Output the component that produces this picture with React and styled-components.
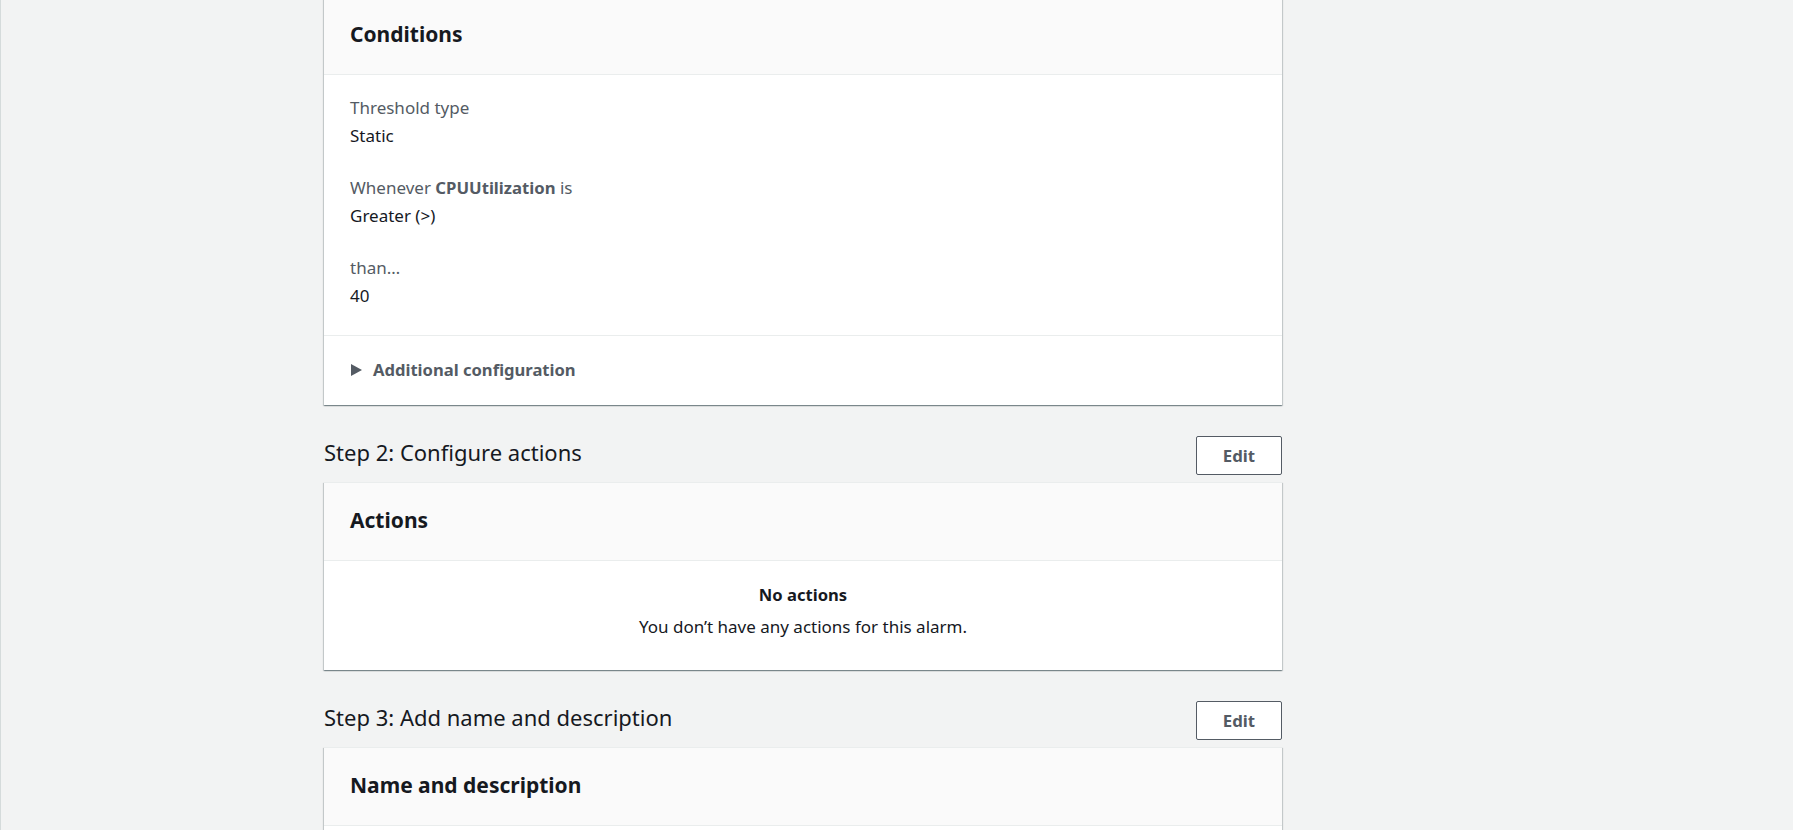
import React from 'react'
import styled, { createGlobalStyle } from 'styled-components'

const GlobalStyle = createGlobalStyle`
  body {
    margin: 0;
    background: #f2f3f3;
    font-family: "Noto Sans", "Open Sans", Arial, sans-serif;
    color: #16191f;
  }
`

const Page = styled.div`
  min-height: 100vh;
  border-left: 1px solid #d5dbdb;
  padding-left: 323px;
  overflow: hidden;
`

// page is scrolled a little, the first card's top is cut off
const Column = styled.div`
  width: 958px;
  margin-top: -4px;
`

const Card = styled.section`
  background: #fff;
  border-top: 1px solid #eaeded;
  box-shadow: 0 1px 1px 0 rgba(0, 28, 36, 0.3),
    1px 1px 1px 0 rgba(0, 28, 36, 0.15),
    -1px 1px 1px 0 rgba(0, 28, 36, 0.15);
  margin-top: ${p => (p.first ? '0' : '7px')};
`

const CardHeader = styled.div`
  background: #fafafa;
  padding: 22px 26px 25px;
  border-bottom: 1px solid #eaeded;
`

const CardTitle = styled.h2`
  margin: 0;
  font-size: 21px;
  line-height: 30px;
  font-weight: 700;
  color: #16191f;
`

const CardBody = styled.div`
  padding: 19px 26px 25px;
  display: flex;
  flex-direction: column;
  gap: 24px;
`

const Field = styled.div`
  font-size: 17px;
  line-height: 28px;
`

const Label = styled.div`
  color: #545b64;
  b {
    font-weight: 700;
    font-size: 16.7px;
  }
`

const Value = styled.div`
  color: #16191f;
`

const Expander = styled.div`
  border-top: 1px solid #eaeded;
  padding: 20px 26px 21px;
  display: flex;
  align-items: center;
  gap: 11px;
  font-size: 16.6px;
  line-height: 28px;
  font-weight: 700;
  color: #545b64;
  svg {
    margin-left: 1px;
  }
`

const StepRow = styled.div`
  margin-top: 31px;
  display: flex;
  justify-content: space-between;
  align-items: flex-start;
`

const StepTitle = styled.h2`
  margin: 0;
  padding-top: 1px;
  font-size: 22px;
  line-height: 30px;
  font-weight: 400;
  color: #16191f;
`

const EditButton = styled.button`
  width: 86px;
  height: 39px;
  border: 1px solid #545b64;
  border-radius: 2px;
  background: #fff;
  color: #545b64;
  font-family: inherit;
  font-size: 16.8px;
  font-weight: 700;
  cursor: pointer;
`

const Empty = styled.div`
  padding: 20px 26px 29px;
  text-align: center;
  font-size: 17px;
  line-height: 28px;
  b {
    display: block;
    font-weight: 700;
    font-size: 16.6px;
  }
  p {
    margin: 4px 0 0;
  }
`

const Spacer = styled.div`
  height: 40px;
`

const Caret = () => (
  <svg width="11" height="12" viewBox="0 0 11 12">
    <polygon points="0,0 11,6 0,12" fill="#545b64" />
  </svg>
)

const Step = ({ title, children }) => (
  <>
    <StepRow>
      <StepTitle>{title}</StepTitle>
      <EditButton>Edit</EditButton>
    </StepRow>
    {children}
  </>
)

export default function App() {
  return (
    <Page>
      <GlobalStyle />
      <Column>
        <Card first>
          <CardHeader>
            <CardTitle>Conditions</CardTitle>
          </CardHeader>
          <CardBody>
            <Field>
              <Label>Threshold type</Label>
              <Value>Static</Value>
            </Field>
            <Field>
              <Label>
                Whenever <b>CPUUtilization</b> is
              </Label>
              <Value>Greater (&gt;)</Value>
            </Field>
            <Field>
              <Label>than…</Label>
              <Value>40</Value>
            </Field>
          </CardBody>
          <Expander>
            <Caret />
            Additional configuration
          </Expander>
        </Card>

        <Step title="Step 2: Configure actions">
          <Card>
            <CardHeader>
              <CardTitle>Actions</CardTitle>
            </CardHeader>
            <Empty>
              <b>No actions</b>
              <p>You don’t have any actions for this alarm.</p>
            </Empty>
          </Card>
        </Step>

        <Step title="Step 3: Add name and description">
          <Card>
            <CardHeader>
              <CardTitle>Name and description</CardTitle>
            </CardHeader>
            <Spacer />
          </Card>
        </Step>
      </Column>
    </Page>
  )
}
